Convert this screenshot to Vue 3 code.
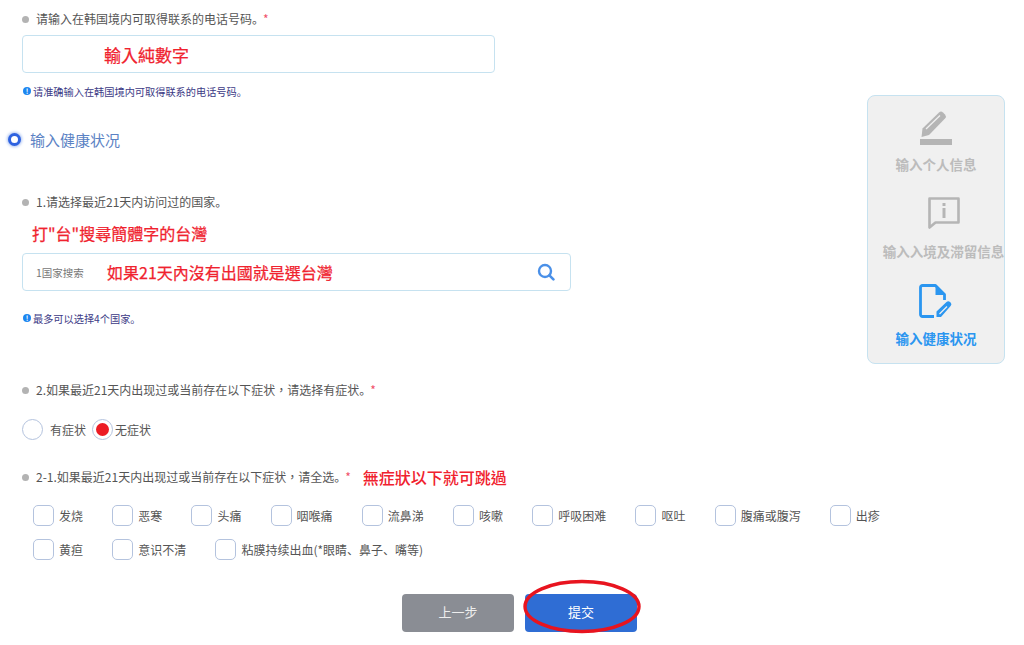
<script setup>
const row1 = [
  { t: '发烧' }, { t: '恶寒' }, { t: '头痛' }, { t: '咽喉痛' }, { t: '流鼻涕' },
  { t: '咳嗽' }, { t: '呼吸困难' }, { t: '呕吐' }, { t: '腹痛或腹泻' }, { t: '出疹' }
]
const row2 = [{ t: '黄疸' }, { t: '意识不清' }, { t: '粘膜持续出血(*眼睛、鼻子、嘴等)' }]
</script>

<template>
  <div class="page">
    <main class="form">
      <div class="label first"><i class="dot"></i><span>请输入在韩国境内可取得联系的电话号码。</span><b class="star">*</b></div>
      <div class="field phone"><span class="red big wide">輸入純數字</span></div>
      <div class="help h1"><i class="info">!</i>请准确输入在韩国境内可取得联系的电话号码。</div>

      <div class="section"><i class="sec-radio"></i><span>输入健康状况</span></div>

      <div class="label l2"><i class="dot"></i><span>1.请选择最近21天内访问过的国家。</span></div>
      <div class="red big note">打"台"搜尋簡體字的台灣</div>
      <div class="field country">
        <span class="ph">1国家搜索</span>
        <span class="red big inner">如果21天內沒有出國就是選台灣</span>
        <svg class="search" width="18" height="18" viewBox="0 0 18 18"><circle cx="8" cy="8" r="6" fill="none" stroke="#4a90e8" stroke-width="2.4"/><path d="M12.4 12.4 16.4 16.4" stroke="#4a90e8" stroke-width="2.6" stroke-linecap="round"/></svg>
      </div>
      <div class="help h2"><i class="info">!</i>最多可以选择4个国家。</div>

      <div class="label l3"><i class="dot"></i><span>2.如果最近21天内出现过或当前存在以下症状<span class="tc">，</span>请选择有症状。</span><b class="star">*</b></div>
      <div class="radios">
        <i class="radio"></i><span class="r1">有症状</span>
        <i class="radio on"></i><span class="r2">无症状</span>
      </div>
      <div class="label l4"><i class="dot"></i><span>2-1.如果最近21天内出现过或当前存在以下症状<span class="tc">，</span>请全选。</span><b class="star">*</b><span class="red big skip">無症狀以下就可跳過</span></div>
      <div class="checks c1">
        <label v-for="c in row1" :key="c.t" class="check"><i class="box"></i>{{ c.t }}</label>
      </div>
      <div class="checks c2">
        <label v-for="c in row2" :key="c.t" class="check"><i class="box"></i>{{ c.t }}</label>
      </div>
      <div class="actions">
        <button class="btn prev">上一步</button>
        <div class="submit-wrap">
          <button class="btn submit">提交</button>
          <svg class="ring" width="121" height="57" viewBox="0 0 121 57"><ellipse cx="60" cy="28.5" rx="57" ry="25" fill="none" stroke="#e8141f" stroke-width="3.4"/></svg>
        </div>
      </div>
    </main>

    <aside class="steps">
      <div class="step">
        <svg width="34" height="36" viewBox="0 0 34 36">
          <path d="M3.500 18.500 20 2.500a3 3 0 0 1 4 0l2 2a3 3 0 0 1 0 4L10 25l-7.500 2z" fill="#b5b5b5"/>
          <path d="M7 19 21 5.500" stroke="#f0f0f0" stroke-width="1.300"/>
          <rect x="1" y="29" width="32" height="6" fill="#b5b5b5"/>
        </svg>
        <span>输入个人信息</span>
      </div>
      <div class="step second">
        <svg width="34" height="36" viewBox="0 0 34 36">
          <path d="M2.500 1.500H31.500V25.500H8.500L2.500 30.500z" fill="none" stroke="#b5b5b5" stroke-width="2.600" stroke-linejoin="round"/>
          <rect x="15.500" y="6" width="3" height="3" fill="#b5b5b5"/>
          <rect x="15.500" y="11" width="3" height="10" fill="#b5b5b5"/>
        </svg>
        <span>输入入境及滞留信息</span>
      </div>
      <div class="step active">
        <svg width="34" height="36" viewBox="0 0 34 36">
          <path d="M15 32.500H3.500a2 2 0 0 1-2-2V3.500a2 2 0 0 1 2-2H16.500l9 9V16" fill="none" stroke="#2b96f0" stroke-width="2.800" stroke-linejoin="round"/>
          <path d="M16.500 1.500 25.500 11H16.500z" fill="#2b96f0"/>
          <path d="M17.500 33V27.500L27.500 18a2.500 2.500 0 0 1 3.500 0l.6.6a2.500 2.500 0 0 1 0 3.500L22 33z" fill="#2b96f0"/>
          <path d="M20.500 30 28 22.500" stroke="#f0f0f0" stroke-width="1.200"/>
        </svg>
        <span>输入健康状况</span>
      </div>
    </aside>
  </div>
</template>

<style scoped>
.page {
  position: relative;
  display: flex;
  width: 1024px;
  height: 645px;
  overflow: hidden;
  background: #fff;
  color: #555;
  font-family: "Noto Sans CJK SC", "Noto Sans", sans-serif;
  font-size: 12px;
}
.form { width: 867px; flex: none; }
.label { display: flex; align-items: center; height: 18px; padding-left: 22px; line-height: 18px; }
.label > span:first-of-type { margin-left: 7px; }
.first { margin-top: 10px; }
.dot { width: 7px; height: 7px; border-radius: 50%; background: #b3b3b3; flex: none; }
.star { margin-left: -1px; color: #f0506a; font-weight: 400; font-size: 12px; }
.tc { font-family: "Noto Sans CJK TC", sans-serif; }
.red { color: #f0222e; }
.big { font-family: "Noto Sans CJK TC", sans-serif; font-size: 16px; font-weight: 400; -webkit-text-stroke: 0.25px #f0222e; }
.wide { font-size: 17px; }
.field {
  display: flex;
  align-items: center;
  height: 38px;
  margin-left: 22px;
  box-sizing: border-box;
  border: 1px solid #c6e2f0;
  border-radius: 4px;
  background: #fff;
}
.phone { width: 473px; margin-top: 7px; padding-left: 81px; }
.help { display: flex; align-items: center; padding-left: 23px; height: 16px; font-size: 10.200px; color: #3c3a86; }
.h1 { margin-top: 10px; }
.info {
  width: 8px; height: 8px; margin-right: 2px; border-radius: 50%; background: #1d86f0;
  color: #fff; font-size: 7px; line-height: 8px; text-align: center; font-style: normal; font-weight: 700;
}
.section { display: flex; align-items: center; height: 24px; margin-top: 28px; padding-left: 9px; font-size: 15px; color: #5b82c4; }
.sec-radio {
  width: 7px; height: 7px; margin: 0 9px 0 -1px; box-sizing: content-box;
  border: 3px solid #2e62e0; border-radius: 50%; background: #fff;
  box-shadow: 0 0 3px 1px #a9c0f2;
}
.l2 { margin-top: 42px; }
.note { height: 24px; line-height: 24px; margin: 10px 0 0 32px; }
.country { width: 549px; margin-top: 8px; padding: 0 15px 0 13px; }
.ph { width: 71px; font-size: 10.500px; color: #777; flex: none; }
.search { margin-left: auto; }
.h2 { margin-top: 19px; }
.l3 { margin-top: 55px; }
.radios { display: flex; align-items: center; height: 24px; margin: 18px 0 0 22px; }
.radio { width: 19px; height: 19px; border: 1px solid #b4c3de; border-radius: 50%; background: #fff; flex: none; }
.radio.on { position: relative; }
.radio.on::after {
  content: ""; position: absolute; left: 3px; top: 3px; width: 13px; height: 13px;
  border-radius: 50%; background: #ec1c24;
}
.r1 { margin-left: 7px; margin-right: 6px; }
.r2 { margin-left: 2px; }
.l4 { margin-top: 27px; }
.skip { margin-left: 12px; font-weight: 500; -webkit-text-stroke: 0; }
.checks { display: flex; margin-left: 33px; gap: 29.200px; }
.c1 { margin-top: 18px; }
.c2 { margin-top: 12px; }
.check { display: flex; align-items: center; height: 22px; white-space: nowrap; }
.box { width: 19px; height: 19px; margin-right: 5px; border: 1px solid #b4c3de; border-radius: 5px; background: #fff; flex: none; }
.actions { display: flex; gap: 11px; margin: 34px 0 0 402px; }
.btn {
  display: block; width: 112px; height: 38px; padding: 0 0 3px; border: 0; border-radius: 4px;
  color: #fff; font: inherit; font-size: 13px;
}
.prev { background: #8a8d94; color: #eee; }
.submit { background: #2f6dd4; }
.submit-wrap { position: relative; }
.ring { position: absolute; left: -3px; top: -16px; }
.steps {
  flex: none; box-sizing: border-box; width: 138px; height: 269px; margin-top: 95px;
  border: 1px solid #c6e2f0; border-radius: 8px; background: #f0f0f0;
  display: flex; flex-direction: column; align-items: center; padding-top: 14px;
}
.step { flex: none; display: flex; flex-direction: column; align-items: center; height: 87px; color: #bcbcbc; font-size: 13.500px; font-weight: 700; white-space: nowrap; }
.step svg { display: block; margin-bottom: 8px; }
.step span { line-height: 20px; }
.step.second { margin-left: 15px; }
.step.active { color: #2b96f0; }
</style>
